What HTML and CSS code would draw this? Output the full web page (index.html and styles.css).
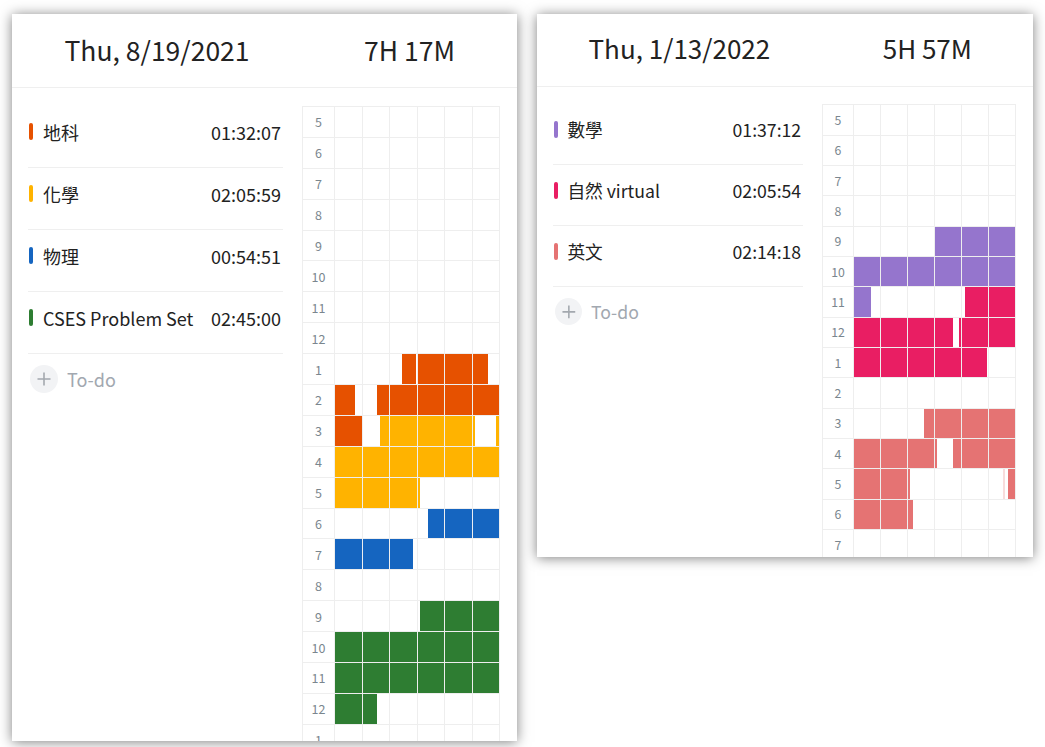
FILE: index.html
```html
<!DOCTYPE html>
<html>
<head>
<meta charset="utf-8">
<link rel="stylesheet" href="styles.css">
</head>
<body>
<div class="page">
  <section class="card card-a">
    <header class="card-head">
      <div class="head-date">Thu, 8/19/2021</div>
      <div class="head-total">7H 17M</div>
    </header>
    <div class="card-body">
      <ul class="tasks">
        <li class="task"><span class="bar o"></span><span class="name">地科</span><span class="time">01:32:07</span></li>
        <li class="task"><span class="bar y"></span><span class="name">化學</span><span class="time">02:05:59</span></li>
        <li class="task"><span class="bar bl"></span><span class="name">物理</span><span class="time">00:54:51</span></li>
        <li class="task"><span class="bar g"></span><span class="name">CSES Problem Set</span><span class="time">02:45:00</span></li>
        <li class="todo"><span class="plus"><svg viewBox="0 0 16 16" width="16" height="16"><path d="M8 1.5v13M1.5 8h13" stroke="#a3a8ae" stroke-width="1.6" fill="none"/></svg></span><span class="todo-text">To-do</span></li>
      </ul>
      <div class="timeline">
        <div class="grid">
          <span class="lbl">5</span><i></i><i></i><i></i><i></i><i></i><i></i>
          <span class="lbl">6</span><i></i><i></i><i></i><i></i><i></i><i></i>
          <span class="lbl">7</span><i></i><i></i><i></i><i></i><i></i><i></i>
          <span class="lbl">8</span><i></i><i></i><i></i><i></i><i></i><i></i>
          <span class="lbl">9</span><i></i><i></i><i></i><i></i><i></i><i></i>
          <span class="lbl">10</span><i></i><i></i><i></i><i></i><i></i><i></i>
          <span class="lbl">11</span><i></i><i></i><i></i><i></i><i></i><i></i>
          <span class="lbl">12</span><i></i><i></i><i></i><i></i><i></i><i></i>
          <span class="lbl">1</span><i></i><i></i><i><b class="o" style="margin-left:46%;width:54%"></b></i><i><b class="o full"></b></i><i><b class="o full"></b></i><i><b class="o" style="width:58%"></b></i>
          <span class="lbl">2</span><i><b class="o" style="width:76%"></b></i><i><b class="o" style="margin-left:55%;width:45%"></b></i><i><b class="o full"></b></i><i><b class="o full"></b></i><i><b class="o full"></b></i><i><b class="o full"></b></i>
          <span class="lbl">3</span><i><b class="o full"></b></i><i><b class="y" style="margin-left:65%;width:35%"></b></i><i><b class="y full"></b></i><i><b class="y full"></b></i><i><b class="y full"></b></i><i><b class="y" style="width:10%"></b><b class="y" style="margin-left:80%;width:10%"></b></i>
          <span class="lbl">4</span><i><b class="y full"></b></i><i><b class="y full"></b></i><i><b class="y full"></b></i><i><b class="y full"></b></i><i><b class="y full"></b></i><i><b class="y full"></b></i>
          <span class="lbl">5</span><i><b class="y full"></b></i><i><b class="y full"></b></i><i><b class="y full"></b></i><i><b class="y" style="width:10%"></b></i><i></i><i></i>
          <span class="lbl">6</span><i></i><i></i><i></i><i><b class="bl" style="margin-left:41%;width:59%"></b></i><i><b class="bl full"></b></i><i><b class="bl full"></b></i>
          <span class="lbl">7</span><i><b class="bl full"></b></i><i><b class="bl full"></b></i><i><b class="bl" style="width:88%"></b></i><i></i><i></i><i></i>
          <span class="lbl">8</span><i></i><i></i><i></i><i></i><i></i><i></i>
          <span class="lbl">9</span><i></i><i></i><i></i><i><b class="g" style="margin-left:8%;width:92%"></b></i><i><b class="g full"></b></i><i><b class="g full"></b></i>
          <span class="lbl">10</span><i><b class="g full"></b></i><i><b class="g full"></b></i><i><b class="g full"></b></i><i><b class="g full"></b></i><i><b class="g full"></b></i><i><b class="g full"></b></i>
          <span class="lbl">11</span><i><b class="g full"></b></i><i><b class="g full"></b></i><i><b class="g full"></b></i><i><b class="g full"></b></i><i><b class="g full"></b></i><i><b class="g full"></b></i>
          <span class="lbl">12</span><i><b class="g full"></b></i><i><b class="g" style="width:55%"></b></i><i></i><i></i><i></i><i></i>
          <span class="lbl">1</span><i></i><i></i><i></i><i></i><i></i><i></i>
        </div>
      </div>
    </div>
  </section>

  <section class="card card-b">
    <header class="card-head">
      <div class="head-date">Thu, 1/13/2022</div>
      <div class="head-total">5H 57M</div>
    </header>
    <div class="card-body">
      <ul class="tasks">
        <li class="task"><span class="bar p"></span><span class="name">數學</span><span class="time">01:37:12</span></li>
        <li class="task"><span class="bar r"></span><span class="name">自然 virtual</span><span class="time">02:05:54</span></li>
        <li class="task"><span class="bar s"></span><span class="name">英文</span><span class="time">02:14:18</span></li>
        <li class="todo"><span class="plus"><svg viewBox="0 0 16 16" width="16" height="16"><path d="M8 1.5v13M1.5 8h13" stroke="#a3a8ae" stroke-width="1.6" fill="none"/></svg></span><span class="todo-text">To-do</span></li>
      </ul>
      <div class="timeline">
        <div class="grid">
          <span class="lbl">5</span><i></i><i></i><i></i><i></i><i></i><i></i>
          <span class="lbl">6</span><i></i><i></i><i></i><i></i><i></i><i></i>
          <span class="lbl">7</span><i></i><i></i><i></i><i></i><i></i><i></i>
          <span class="lbl">8</span><i></i><i></i><i></i><i></i><i></i><i></i>
          <span class="lbl">9</span><i></i><i></i><i></i><i><b class="p full"></b></i><i><b class="p full"></b></i><i><b class="p full"></b></i>
          <span class="lbl">10</span><i><b class="p full"></b></i><i><b class="p full"></b></i><i><b class="p full"></b></i><i><b class="p full"></b></i><i><b class="p full"></b></i><i><b class="p full"></b></i>
          <span class="lbl">11</span><i><b class="p" style="width:63%"></b></i><i></i><i></i><i></i><i><b class="r" style="margin-left:11%;width:89%"></b></i><i><b class="r full"></b></i>
          <span class="lbl">12</span><i><b class="r full"></b></i><i><b class="r full"></b></i><i><b class="r full"></b></i><i><b class="r" style="width:70%"></b><b class="r" style="margin-left:22%;width:8%"></b></i><i><b class="r full"></b></i><i><b class="r full"></b></i>
          <span class="lbl">1</span><i><b class="r full"></b></i><i><b class="r full"></b></i><i><b class="r full"></b></i><i><b class="r full"></b></i><i><b class="r" style="width:95%"></b></i><i></i>
          <span class="lbl">2</span><i></i><i></i><i></i><i></i><i></i><i></i>
          <span class="lbl">3</span><i></i><i></i><i><b class="s" style="margin-left:59%;width:41%"></b></i><i><b class="s full"></b></i><i><b class="s full"></b></i><i><b class="s full"></b></i>
          <span class="lbl">4</span><i><b class="s full"></b></i><i><b class="s full"></b></i><i><b class="s full"></b></i><i><b class="s" style="width:8%"></b><b class="s" style="margin-left:62%;width:30%"></b></i><i><b class="s full"></b></i><i><b class="s full"></b></i>
          <span class="lbl">5</span><i><b class="s full"></b></i><i><b class="s full"></b></i><i><b class="s" style="width:7%"></b></i><i></i><i></i><i><b class="s faint" style="margin-left:55%;width:4%"></b><b class="s" style="margin-left:13%;width:28%"></b></i>
          <span class="lbl">6</span><i><b class="s full"></b></i><i><b class="s full"></b></i><i><b class="s" style="width:17%"></b></i><i></i><i></i><i></i>
          <span class="lbl">7</span><i></i><i></i><i></i><i></i><i></i><i></i>
        </div>
      </div>
    </div>
  </section>
</div>
</body>
</html>
```

FILE: styles.css
```css
html, body {
  margin: 0;
  padding: 0;
  background: #ffffff;
}

body {
  font-family: "Noto Sans CJK TC", "Noto Sans", sans-serif;
  color: #222222;
  overflow: hidden;
}

.page {
  display: flex;
  align-items: flex-start;
  gap: 20px;
  padding: 14px 0 0 12px;
  width: 1045px;
  height: 747px;
  box-sizing: border-box;
}

.card {
  width: 505px;
  background: #ffffff;
  box-shadow: 0 1px 12px rgba(0, 0, 0, 0.5);
  overflow: hidden;
  flex: none;
}

.card-a {
  height: 727px;
}

.card-b {
  height: 553px;
  zoom: 0.982;
}

.card-head {
  display: flex;
  align-items: center;
  height: 73px;
  border-bottom: 1px solid #efefef;
}

.head-date {
  width: 290px;
  text-align: center;
  font-size: 26.5px;
  padding-bottom: 2px;
}

.head-total {
  flex: 1;
  text-align: center;
  font-size: 26.5px;
  padding-bottom: 2px;
}

.card-b .head-date,
.card-b .head-total {
  padding-bottom: 5px;
}

.card-body {
  display: flex;
  align-items: flex-start;
  padding-top: 18px;
}

.tasks {
  list-style: none;
  margin: 0;
  padding: 0 19px 0 16px;
  width: 290px;
  box-sizing: border-box;
}

.task {
  display: flex;
  align-items: center;
  border-bottom: 1px solid #efefef;
  padding: 0 2px 10px 1px;
  box-sizing: content-box;
  height: 51px;
  font-size: 18px;
}

.bar {
  width: 4px;
  height: 17px;
  border-radius: 2px;
  margin-right: 10px;
  flex: none;
}

.name {
  flex: 1;
  white-space: nowrap;
}

.time {
  white-space: nowrap;
}

.todo {
  display: flex;
  align-items: center;
  height: 52px;
  padding-left: 2px;
  padding-bottom: 2px;
  box-sizing: border-box;
  font-size: 18px;
}

.plus {
  width: 28px;
  height: 28px;
  border-radius: 50%;
  background: #f2f3f5;
  display: flex;
  align-items: center;
  justify-content: center;
  margin-right: 9px;
}

.todo-text {
  color: #a2a8b0;
}

.timeline {
  width: 198px;
}

.grid {
  display: grid;
  grid-template-columns: 32px repeat(6, 1fr);
  grid-auto-rows: 30.9px;
  border-top: 1px solid #eeeeee;
  border-left: 1px solid #eeeeee;
}

.grid > .lbl,
.grid > i {
  border-right: 1px solid #eeeeee;
  border-bottom: 1px solid #eeeeee;
  box-sizing: border-box;
}

.lbl {
  display: flex;
  align-items: center;
  justify-content: center;
  font-size: 12.5px;
  color: #7a868e;
  font-family: "Noto Sans CJK TC", "Noto Sans", sans-serif;
}

.grid > i {
  display: flex;
}

.grid b {
  display: block;
  height: 100%;
  flex: none;
}

.grid b.full {
  width: 100%;
}

.o { background: #e65100; }
.y { background: #ffb300; }
.bl { background: #1565c0; }
.g { background: #2e7d32; }
.p { background: #9575cd; }
.r { background: #e91e63; }
.s { background: #e57373; }

.grid b.faint {
  opacity: 0.25;
}
```
